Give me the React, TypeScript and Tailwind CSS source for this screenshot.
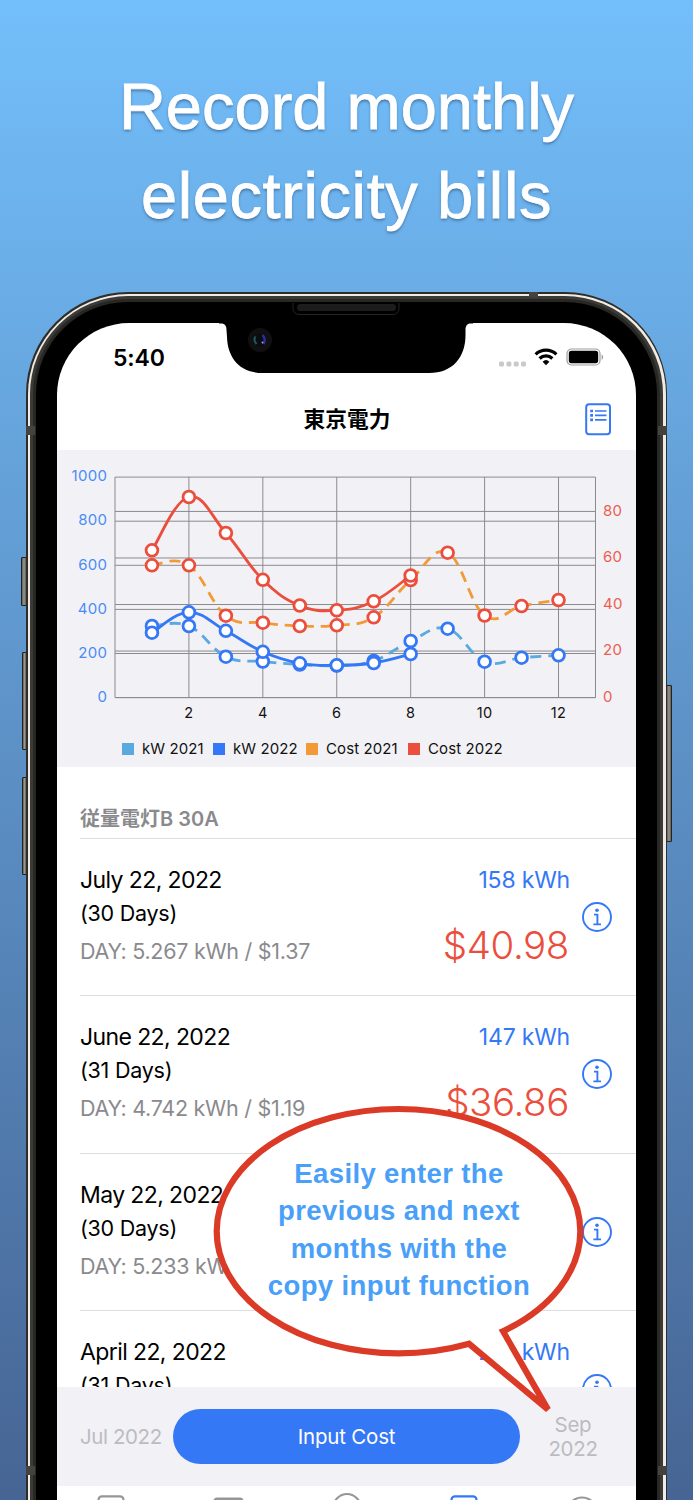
type Point = [number, number]

type Bill = {
  date: string
  days: number
  perDay: string
  kwh: string
  cost: string
}

const bills: Bill[] = [
  { date: "July 22, 2022", days: 30, perDay: "5.267 kWh / $1.37", kwh: "158 kWh", cost: "$40.98" },
  { date: "June 22, 2022", days: 31, perDay: "4.742 kWh / $1.19", kwh: "147 kWh", cost: "$36.86" },
  { date: "May 22, 2022", days: 30, perDay: "5.233 kWh / $1.27", kwh: "157 kWh", cost: "$38.20" },
  { date: "April 22, 2022", days: 31, perDay: "6.774 kWh / $1.62", kwh: "210 kWh", cost: "$50.34" },
]

// y positions inside the chart panel, one per month starting at January
const kw2021 = [176, 176, 206.7, 211.5, 214.5, 215.5, 211, 191, 178.7, 211.7, 207.7, 205.3]
const kw2022 = [182.7, 162.3, 180.8, 201.8, 213.3, 215.3, 213, 204]
const cost2021 = [115.3, 115.3, 165.7, 172.7, 176, 175.3, 167.3, 130, 102.7, 165.5, 156, 150]
const cost2022 = [100.3, 47, 83, 129.8, 155.5, 160.3, 151.3, 125.5]

const monthX = (m: number) => 58 + m * 36.96

const toPoints = (ys: number[]): Point[] => ys.map((y, i) => [monthX(i + 1), y])

// smooth line, 0.2 tension on both sides of every point
function curve(ys: number[]) {
  const p = toPoints(ys)
  let d = `M${p[0][0]} ${p[0][1]}`
  for (let i = 1; i < p.length; i++) {
    const before = p[Math.max(i - 2, 0)]
    const prev = p[i - 1]
    const cur = p[i]
    const next = p[Math.min(i + 1, p.length - 1)]
    d += ` C${prev[0] + (cur[0] - before[0]) * 0.2} ${prev[1] + (cur[1] - before[1]) * 0.2}`
    d += ` ${cur[0] - (next[0] - prev[0]) * 0.2} ${cur[1] - (next[1] - prev[1]) * 0.2} ${cur[0]} ${cur[1]}`
  }
  return d
}

function Dots({ ys, color }: { ys: number[]; color: string }) {
  return (
    <g fill="#fff" stroke={color} strokeWidth="2.8">
      {toPoints(ys).map(([x, y]) => (
        <circle key={x} cx={x} cy={y} r="5.9" />
      ))}
    </g>
  )
}

const leftTicks = [0, 200, 400, 600, 800, 1000]
const rightTicks = [0, 20, 40, 60, 80]
const monthTicks = [2, 4, 6, 8, 10, 12]

function Chart() {
  return (
    <svg className="block h-[286px] w-[578px]" viewBox="0 0 578 286" fontSize="15" letterSpacing="0.3">
      <g stroke="#8b8b8f" strokeWidth="1" fill="none">
        {leftTicks.map((t) => (
          <path key={t} d={`M58 ${247.6 - t * 0.2205}H538.5`} />
        ))}
        {rightTicks.map((t) => (
          <path key={t} d={`M58 ${247.6 - t * 2.327}H538.5`} />
        ))}
        {monthTicks.map((m) => (
          <path key={m} d={`M${monthX(m)} 27V247.6`} />
        ))}
        <path d="M58 27V247.6M538.5 27V247.6" />
      </g>
      <g fill="#4a8cf7" textAnchor="end">
        {leftTicks.map((t) => (
          <text key={t} x="50.3" y={251.8 - t * 0.2205}>
            {t}
          </text>
        ))}
      </g>
      <g fill="#ec5f50">
        {rightTicks.map((t) => (
          <text key={t} x="546" y={251.8 - t * 2.327}>
            {t}
          </text>
        ))}
      </g>
      <g fill="#111" textAnchor="middle" fontSize="14.5">
        {monthTicks.map((m) => (
          <text key={m} x={monthX(m)} y="268.3">
            {m}
          </text>
        ))}
      </g>
      <g fill="none" strokeWidth="2.8">
        <path d={curve(kw2021)} stroke="#5aaae0" strokeDasharray="11 7" />
        <path d={curve(kw2022)} stroke="#3478f6" />
        <path d={curve(cost2021)} stroke="#f19a37" strokeDasharray="11 7" />
        <path d={curve(cost2022)} stroke="#eb4e3d" />
      </g>
      <Dots ys={kw2021} color="#3478f6" />
      <Dots ys={kw2022} color="#3478f6" />
      <Dots ys={cost2021} color="#eb4e3d" />
      <Dots ys={cost2022} color="#eb4e3d" />
    </svg>
  )
}

function Legend() {
  return (
    <div className="flex h-[26px] items-center pl-[65px] text-[15px] tracking-[0.1px] text-[#111]">
      <i className="mr-[8px] size-3 bg-[#5aaae0]" />
      <span className="w-[71px] whitespace-nowrap">kW 2021</span>
      <i className="mr-[8px] size-3 bg-[#3478f6]" />
      <span className="w-[73px] whitespace-nowrap">kW 2022</span>
      <i className="mr-[8px] size-3 bg-[#f19a37]" />
      <span className="w-[82px] whitespace-nowrap">Cost 2021</span>
      <i className="mr-[8px] size-3 bg-[#eb4e3d]" />
      <span className="whitespace-nowrap">Cost 2022</span>
    </div>
  )
}

function InfoIcon() {
  return (
    <svg className="size-[30px]" viewBox="0 0 30 30" fill="none" stroke="#3478f6" strokeWidth="1.9">
      <circle cx="15" cy="15" r="14" />
      <circle cx="15" cy="8.2" r="1.8" fill="#3478f6" stroke="none" />
      <path d="M12 12.6h3.4v10M11.4 22.4h7.6" />
    </svg>
  )
}

function BillRow({ bill }: { bill: Bill }) {
  return (
    <li className="ml-[23px] flex h-[157.5px] shrink-0 border-b border-[#dededf] pt-[27px]">
      <div className="w-[300px] whitespace-nowrap">
        <div className="text-[23px] leading-[29px] tracking-[-0.6px] text-black">{bill.date}</div>
        <div className="mt-[4px] text-[21.5px] leading-[28px] tracking-[-0.25px] text-black">({bill.days} Days)</div>
        <div className="mt-[10px] text-[21.5px] leading-[28px] tracking-[-0.27px] text-[#8a8a8e]">DAY: {bill.perDay}</div>
      </div>
      <div className="w-[190px] text-right">
        <div className="text-[23px] leading-[29px] tracking-[-0.2px] text-[#3478f6]">{bill.kwh}</div>
        <div className="mt-[26px] pr-[1px] text-[38.5px] leading-[48px] font-[360] tracking-[-0.4px] text-[#eb4e3d]">{bill.cost}</div>
      </div>
      <div className="ml-[12px] pt-[36px]">
        <InfoIcon />
      </div>
    </li>
  )
}

function StatusBar() {
  return (
    <div className="flex h-[70px] items-center pl-[56px]">
      <span className="w-[385px] text-[23px] font-semibold tracking-[-0.1px]">5:40</span>
      <svg className="mt-[12px] h-[6px] w-[29px]" viewBox="0 0 29 6" fill="#c9c9cb">
        <rect x="1" y="0.5" width="5" height="5" rx="1.6" />
        <rect x="8.4" y="0.5" width="5" height="5" rx="1.6" />
        <rect x="15.7" y="0.5" width="5" height="5" rx="1.6" />
        <rect x="23" y="0.5" width="5" height="5" rx="1.6" />
      </svg>
      <svg className="mb-[2px] ml-[6.5px] h-[18px] w-[24px]" viewBox="0 0 24 18" fill="none" stroke="#000" strokeWidth="3.2">
        <path d="M1.6 6.4a15 15 0 0 1 20.8 0" />
        <path d="M5.6 10.5a9.2 9.2 0 0 1 12.8 0" />
        <path d="M12 17.2l-3.4-3.5a5 5 0 0 1 6.8 0z" fill="#000" stroke="none" />
      </svg>
      <svg className="mb-[2px] ml-[8.5px] h-[18px] w-[38px]" viewBox="0 0 38 18">
        <rect x="1" y="1" width="33" height="16" rx="4.5" fill="none" stroke="#9d9d9f" strokeWidth="1.2" />
        <rect x="2.8" y="2.8" width="29.4" height="12.4" rx="2.6" />
        <path d="M35.6 6.4c2 .8 2 4.6 0 5.4z" fill="#9d9d9f" />
      </svg>
    </div>
  )
}

function NavBar() {
  return (
    <div className="flex h-[57px] items-center justify-end pr-[24px] pb-[4px]">
      <h2 className="w-[88px] text-center text-[21.7px] font-bold whitespace-nowrap">東京電力</h2>
      <svg className="ml-[194px] h-[33px] w-[27px]" viewBox="0 0 27 33" fill="none" stroke="#3478f6" strokeWidth="2">
        <rect x="1.2" y="1.3" width="23.8" height="30" rx="3" />
        <path d="M10 8h11.5M10 12.4h11.5M10 16.9h11.5" strokeWidth="1.6" />
        <path d="M5.2 8h2.8M5.2 12.4h2.8M5.2 16.9h2.8" strokeWidth="2.6" />
      </svg>
    </div>
  )
}

function Notch() {
  return (
    <svg className="absolute -top-[20px] left-[162px] h-[80px] w-[254px]" viewBox="0 0 254 80">
      <path d="M0 19H254V20.5H251.5C248 20.5 246.5 23 246.5 27V32C246.5 54 234 70 210 70H44C20 70 8.5 54 8 34L7.5 27C7.5 23 6 20.5 2 20.5H0Z" fill="#000" />
      <rect x="74" y="-5" width="106" height="16.5" rx="6" fill="#000" stroke="#242424" />
      <rect x="78" y="1" width="99" height="7" rx="3.5" fill="#1c1c1c" />
      <circle cx="41" cy="37" r="12" fill="#101010" />
      <circle cx="41" cy="37" r="6.5" fill="#080d12" />
      <path d="M36.5 33.5q-2.5 3.5 1 7.5" stroke="#26575c" strokeWidth="2" fill="none" />
      <path d="M43.5 32q4 4.5 1 9" stroke="#2d2d9c" strokeWidth="2.4" fill="none" />
      <circle cx="43.5" cy="39.5" r="1" fill="#a99ae0" />
    </svg>
  )
}

function TabBar() {
  return (
    <svg className="block h-[60px] w-[578px] bg-white" viewBox="0 0 578 60" fill="none" stroke="#969696" strokeWidth="2.2">
      <rect x="41.5" y="10.3" width="25" height="31" rx="3.5" />
      <rect x="156.5" y="11.5" width="30" height="22" rx="3.5" fill="#969696" stroke="none" />
      <path d="M159.5 17h24" stroke="#fff" strokeWidth="1.5" />
      <circle cx="290" cy="21.5" r="13.5" />
      <rect x="394.5" y="10.3" width="25" height="31" rx="3.5" stroke="#3478f6" />
      <circle cx="525" cy="26.5" r="15" />
    </svg>
  )
}

function Balloon() {
  return (
    <div className="absolute top-[1104px] left-[212px] h-[312px] w-[374px]">
      <svg className="absolute inset-0 size-full" viewBox="212 1104 374 312">
        <path
          d="M469 1343.8A181.8 122.2 0 0 1 398.5 1353.4A181.8 122.2 0 0 1 216.7 1231.2A181.8 122.2 0 0 1 398.5 1109A181.8 122.2 0 0 1 580.3 1231.2A181.8 122.2 0 0 1 503 1331.2L548 1409.6Z"
          fill="#fff"
          stroke="#da3a26"
          strokeWidth="6.2"
        />
      </svg>
      <p className="relative pt-[51px] text-center font-['Liberation_Sans','Noto_Sans_CJK_JP',sans-serif] text-[27.5px] leading-[37.3px] font-bold tracking-[0.38px] whitespace-nowrap text-[#4a9ff8]">
        Easily enter the
        <br />
        previous and next
        <br />
        months with the
        <br />
        copy input function
      </p>
    </div>
  )
}

function SideButton({ className }: { className: string }) {
  return (
    <div
      className={`absolute rounded-[1px] border border-[#22221f] bg-linear-to-r from-[#5f5e59] via-[#99978f] to-[#5f5e59] ${className}`}
    />
  )
}

export default function App() {
  return (
    <main className="relative h-[1500px] w-[693px] overflow-hidden bg-linear-to-b from-[#73bffb] to-[#466594] font-['Inter','Noto_Sans_CJK_JP',sans-serif]">
      <h1 className="h-[292px] pt-[62px] text-center font-['Liberation_Sans','Noto_Sans_CJK_JP',sans-serif] text-[65px] leading-[89px] font-normal text-white [-webkit-text-stroke:0.8px_white] [text-shadow:0_2px_3px_rgba(30,60,100,0.55)]">
        <span className="block">Record monthly</span>
        <span className="block tracking-[0.6px]">electricity bills</span>
      </h1>

      <div className="relative ml-[26px] h-[1400px] w-[641px]">
        <SideButton className="top-[265px] -left-[5px] h-[49px] w-[6px]" />
        <SideButton className="top-[360px] -left-[4px] h-[98px] w-[5px]" />
        <SideButton className="top-[485px] -left-[4px] h-[98px] w-[5px]" />
        <SideButton className="top-[393px] -right-[5px] h-[157px] w-[6px]" />

        <div className="relative h-full rounded-[102px] bg-[#2e2d2a] p-[1.5px]">
          <div className="h-full rounded-[100.5px] bg-[#f0ece5] p-[2.5px]">
            <div className="h-full rounded-[98px] bg-[#3b3a37] p-[3px]">
              <div className="h-full rounded-[95px] bg-[#272724] p-[3px]">
                <div className="h-full rounded-[92px] bg-black px-[21px] pt-[21px]">
                  <div className="relative">
                    <div className="flex h-[1300px] w-[579px] flex-col overflow-hidden rounded-t-[72px] bg-white">
                      <StatusBar />
                      <NavBar />
                      <section className="h-[317px] shrink-0 bg-[#f2f1f6]">
                        <Chart />
                        <Legend />
                      </section>
                      <h3 className="ml-[23px] flex h-[71.5px] shrink-0 items-end border-b border-[#dededf] pb-[5.5px] text-[20px] leading-[26px] font-semibold text-[#8a8a8e]">
                        従量電灯B 30A
                      </h3>
                      <ul className="flex h-[548.5px] shrink-0 flex-col overflow-hidden">
                        {bills.map((bill) => (
                          <BillRow key={bill.date} bill={bill} />
                        ))}
                      </ul>
                      <div className="flex h-[99px] shrink-0 items-center bg-[#f2f1f6] text-[20.5px] text-[#bcbcc0]">
                        <span className="w-[116px] pt-px pl-[23px] tracking-[-0.4px] whitespace-nowrap">Jul 2022</span>
                        <button type="button" className="h-[55px] w-[347px] rounded-full bg-[#3478f6] pt-px tracking-[-0.2px] text-white">
                          Input Cost
                        </button>
                        <span className="ml-[22px] w-[62px] text-center leading-[24px] tracking-[-0.3px]">Sep 2022</span>
                      </div>
                      <TabBar />
                    </div>
                    <Notch />
                  </div>
                </div>
              </div>
            </div>
          </div>
          {/* antenna bands */}
          <div className="absolute top-0 left-[503px] h-[5px] w-[9px] bg-[#45433f]" />
          <div className="absolute top-[134px] left-0 h-[9px] w-[9px] bg-[#45433f]" />
          <div className="absolute top-[134px] right-0 h-[9px] w-[9px] bg-[#45433f]" />
          <div className="absolute top-[1174px] left-0 h-[9px] w-[9px] bg-[#45433f]" />
          <div className="absolute top-[1174px] right-0 h-[9px] w-[9px] bg-[#45433f]" />
        </div>
      </div>

      <Balloon />
    </main>
  )
}
